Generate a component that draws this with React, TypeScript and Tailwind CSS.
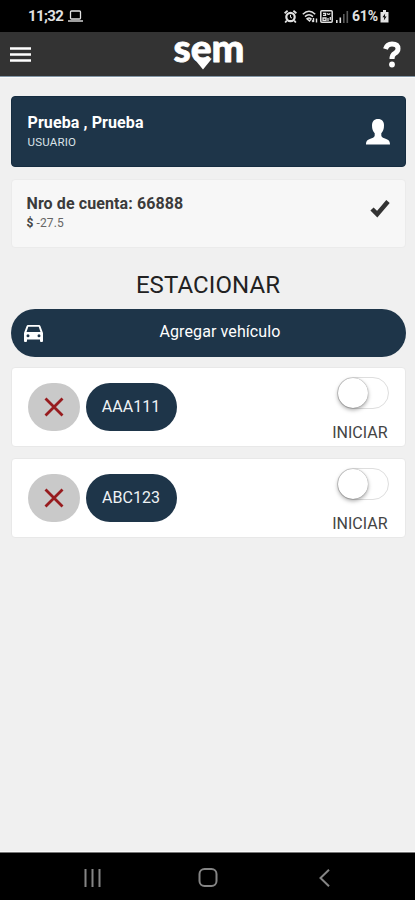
import React from "react";

const vehicles = [
  { plate: "AAA111", active: false },
  { plate: "ABC123", active: false },
];

function StatusBar(): React.ReactElement {
  return (
    <div className="flex h-8 shrink-0 items-center bg-black pl-7 pr-[26px] text-[#e2e2e2]">
      <span className="w-9 whitespace-nowrap text-[15px] font-bold leading-none tracking-[-0.6px]">
        11;32
      </span>
      <svg width="15" height="12" viewBox="0 0 15 12" fill="none" stroke="currentColor" className="ml-1">
        <rect x="2.5" y="1" width="10" height="8" rx="1" strokeWidth="1.3" />
        <path d="M0 11h15" strokeWidth="1.4" />
      </svg>
      <div className="ml-auto flex items-center">
        <svg width="13" height="13" viewBox="0 0 13 13" fill="none" stroke="currentColor" className="mr-[5px]">
          <circle cx="6.5" cy="7" r="4.2" strokeWidth="2.2" />
          <path d="M.6 3.2 3.6.8M12.4 3.2 9.4.8M2.8 10.5l-1.6 2M10.2 10.5l1.6 2" strokeWidth="1.8" />
          <path d="M6.5 4.8V7.3L8 8" strokeWidth="1" />
        </svg>
        <svg width="16" height="13" viewBox="0 0 16 13" fill="none" stroke="currentColor" className="mr-[2px]">
          <path d="M.8 4.2Q7 -1.6 13.2 4.2M3 6.6Q7 2.8 11 6.6M5 8.8q2-1.6 4 0L7.5 11z" strokeWidth="1.5" />
          <path d="M11.5 8v4M10 10.5l1.5 1.5M14.5 12.4V8.5" strokeWidth="1.4" />
        </svg>
        <svg width="13" height="13" viewBox="0 0 13 13" fill="none" stroke="currentColor" className="mr-[3px]">
          <rect x=".8" y=".8" width="11.4" height="11.4" rx="1" strokeWidth="1.5" />
          <path d="M3 3.4h2.5v2H3M7 3.4q1.6 2 3.2 0M3 8h3v2.3H3zM8 8v3M10.3 7v3" strokeWidth="1.3" />
        </svg>
        <svg width="13" height="13" viewBox="0 0 13 13" fill="currentColor" className="mr-[3px]">
          <path d="M0 10h1.6v3H0zM3.5 7.5h1.6V13H3.5z" />
          <path d="M7 4h1.6v9H7zM10.5 1h1.6v12h-1.6z" opacity=".4" />
        </svg>
        <span className="w-7 whitespace-nowrap text-[14px] font-bold leading-none tracking-[-0.2px]">61%</span>
        <svg width="9" height="13" viewBox="0 0 9 13">
          <path d="M3 0h3v2h2.5v10.5H.5V2H3z" fill="currentColor" />
          <path d="M5.2 3.5 2.5 7.3h1.8L3.8 10.6 6.6 6.6H4.8z" fill="#000" />
        </svg>
      </div>
    </div>
  );
}

function Logo(): React.ReactElement {
  return (
    <svg width="74" height="44" viewBox="0 0 74 44" className="overflow-visible">
      <text
        x="3.5"
        y="30.3"
        fontFamily="Lato"
        fontWeight="900"
        fontSize="38"
        textLength="71"
        lengthAdjust="spacingAndGlyphs"
        fill="#fff"
        stroke="#fff"
        strokeWidth=".8"
        strokeLinejoin="round"
      >
        sem
      </text>
      <path d="M24 26.5q9 4.500 18 0L33 37.500z" fill="#fff" />
    </svg>
  );
}

function Header(): React.ReactElement {
  return (
    <header className="flex h-[45px] shrink-0 items-center justify-between border-b border-[#8296a6] bg-[#333] pl-2.5 pr-[14px] text-white">
      <svg width="21" height="17" viewBox="0 0 21 17" stroke="currentColor" strokeWidth="2.6">
        <path d="M0 2.5h21M0 8.5h21M0 14.5h21" />
      </svg>
      <Logo />
      <svg width="18" height="27" viewBox="0 0 18 27" fill="none" stroke="currentColor" strokeWidth="5">
        <path d="M2.5 8Q4 3 9 3q6 0 6 4.8 0 2.8-3.2 4.6Q9 14 9 18" />
        <circle cx="9" cy="23.5" r="2.9" fill="currentColor" stroke="none" />
      </svg>
    </header>
  );
}

function VehicleCard({ plate, active }: { plate: string; active: boolean }): React.ReactElement {
  return (
    <article className="flex h-20 items-start justify-between rounded-[4px] border border-[#e8e8e8] bg-white px-4">
      <div className="mt-[15px] flex gap-[6px]">
        <button className="flex h-12 w-[52px] items-center justify-center rounded-full bg-[#c9c9c9]">
          <svg width="20" height="20" viewBox="0 0 20 20" stroke="#971b1e" strokeWidth="2.8">
            <path d="m1.5 1.5 17 17M18.5 1.5l-17 17" />
          </svg>
        </button>
        <button className="h-12 w-[91px] rounded-full bg-[#1e3549] text-[16px] text-[#eef2f5]">
          {plate}
        </button>
      </div>
      <div className="flex w-[57px] flex-col items-end">
        <button
          role="switch"
          aria-checked={active}
          className="mt-[9px] flex h-8 w-[52px] rounded-full border border-[#dedede] bg-white"
        >
          <span className="h-[30px] w-[30px] rounded-full bg-white shadow-[0_2px_4px_rgba(0,0,0,0.35),0_0_1px_rgba(0,0,0,0.5)]" />
        </button>
        <span className="mt-[14px] mr-px text-[16px] leading-5 text-[#444]">INICIAR</span>
      </div>
    </article>
  );
}

function NavBar(): React.ReactElement {
  return (
    <nav className="flex h-12 shrink-0 items-center justify-between border-t border-[#777] bg-black pl-[84px] pr-[85px] pt-[2px] text-[#858585]">
      <svg width="17" height="18" viewBox="0 0 17 18" stroke="currentColor" strokeWidth="2">
        <path d="M1.5 0v18M8.5 0v18M15.5 0v18" />
      </svg>
      <svg width="20" height="19" viewBox="0 0 20 19" fill="none" stroke="currentColor" strokeWidth="2" className="mr-1">
        <rect x="1.5" y="1" width="17" height="17" rx="5" />
      </svg>
      <svg width="11" height="18" viewBox="0 0 11 18" fill="none" stroke="currentColor" strokeWidth="2">
        <path d="M10 .8 1.5 9l8.500 8.200" />
      </svg>
    </nav>
  );
}

export default function App(): React.ReactElement {
  return (
    <div className="flex h-[900px] w-[415px] flex-col overflow-hidden bg-[#f0f0f0] font-['Roboto',sans-serif]">
      <StatusBar />
      <Header />
      <main className="flex-1 border-y border-[#fafafa] pl-[10.5px] pr-[9.5px] pt-[18px]">
        <section className="flex h-[71px] items-center justify-between rounded-[4px] border border-[#152c40] bg-[#1e3549] pl-4 pr-[14px] text-white">
          <div>
            <p className="text-[16px] font-bold leading-5 tracking-[0.1px]">Prueba , Prueba</p>
            <p className="text-[11.5px] leading-[18px] tracking-[0.2px] text-[#dbe2e8]">USUARIO</p>
          </div>
          <svg width="26" height="26" viewBox="0 0 26 26" fill="currentColor">
            <path d="M13 0c4 0 6 2.500 6 6.500 0 3.500-1 6-2.700 7.700v2.300c0 1.300 1 2 3 2.700 3.700 1.300 5.700 2 5.700 6.300H1c0-4.300 2-5 5.700-6.300 2-.7 3-1.400 3-2.700v-2.300C8 12.500 7 10 7 6.500 7 2.500 9 0 13 0z" />
          </svg>
        </section>
        <section className="mt-3 flex h-[69px] items-start justify-between rounded-[4px] border border-[#ebebeb] bg-[#f7f7f7] px-[15px]">
          <div className="mt-[13.500px] text-[#3b3b3b]">
            <p className="text-[16px] font-bold leading-5 tracking-[0.1px]">Nro de cuenta: 66888</p>
            <p className="text-[12px] leading-[18px] tracking-[0.1px] text-[#666]">
              <b className="text-[#444]">$</b> -27.5
            </p>
          </div>
          <svg width="20" height="20" viewBox="0 0 20 20" fill="none" stroke="#333" strokeWidth="4.5" className="mt-[19px]">
            <path d="m2 10 5.2 5.2L18 2.5" />
          </svg>
        </section>

        <h2 className="mt-[21px] text-center text-[24px] leading-8 tracking-[0.1px] text-[#222]">ESTACIONAR</h2>

        <button className="mt-2 flex h-12 w-full items-center rounded-full bg-[#1e3549] pl-[13px] text-white">
          <svg width="19" height="17" viewBox="0 0 19 17" fill="currentColor" fillRule="evenodd">
            <path d="M4 0h11q1 0 1.400 1L19 8v8q0 1-1 1h-1q-1 0-1-1v-1.500H3V16q0 1-1 1H1q-1 0-1-1V8l2.600-7Q3 0 4 0zM4.300 1.800 2.500 7h14l-1.800-5.200zM4 9.200a1.500 1.500 0 1 0 0 3 1.500 1.500 0 0 0 0-3zM15 9.200a1.500 1.500 0 1 0 0 3 1.500 1.500 0 0 0 0-3z" />
          </svg>
          <span className="flex-1 pb-[3px] pr-2 text-center text-[16px] tracking-[0.1px]">Agregar vehículo</span>
        </button>

        <div className="mt-[9.500px] flex flex-col gap-[11px]">
          {vehicles.map((vehicle) => (
            <VehicleCard key={vehicle.plate} {...vehicle} />
          ))}
        </div>
      </main>
      <NavBar />
    </div>
  );
}
